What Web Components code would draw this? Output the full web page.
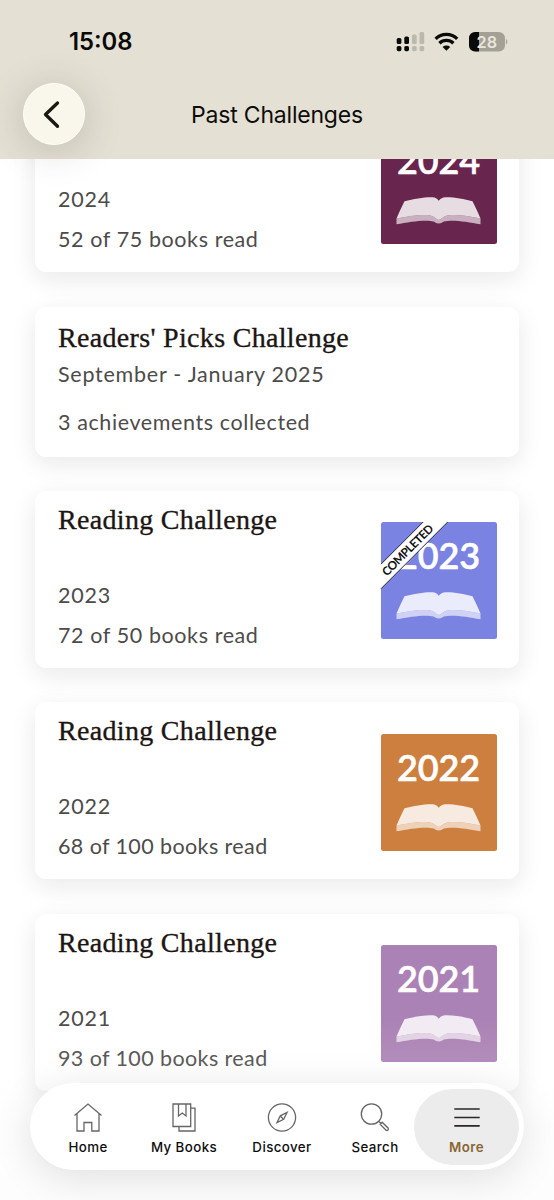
<!DOCTYPE html>
<html lang="en">
<head>
<meta charset="utf-8">
<meta name="viewport" content="width=device-width, initial-scale=1">
<title>Past Challenges</title>
<style>
    html, body {
        margin: 0;
        height: 1200px;
        overflow: hidden;
        background: #fff;
    }
    .tight { --tracking: .4px; }
</style>
</head>
<body>
<challenges-app>
    <page-header slot="header" heading="Past Challenges"></page-header>

    <challenge-card period="2024" detail="52 of 75 books read">
        <year-badge slot="badge" year="2024" color="#68264e"></year-badge>
    </challenge-card>
    <challenge-card compact heading="Readers' Picks Challenge" period="September - January 2025" detail="3 achievements collected"></challenge-card>
    <challenge-card heading="Reading Challenge" period="2023" detail="72 of 50 books read">
        <year-badge slot="badge" year="2023" color="#7a82e2" completed></year-badge>
    </challenge-card>
    <challenge-card class="tight" heading="Reading Challenge" period="2022" detail="68 of 100 books read">
        <year-badge slot="badge" year="2022" color="#cc7f3f"></year-badge>
    </challenge-card>
    <challenge-card class="tight" heading="Reading Challenge" period="2021" detail="93 of 100 books read">
        <year-badge slot="badge" year="2021" color="#ab82b5"></year-badge>
    </challenge-card>

    <tab-bar slot="tabs">
        <tab-item icon="home" label="Home"></tab-item>
        <tab-item icon="books" label="My Books"></tab-item>
        <tab-item icon="discover" label="Discover"></tab-item>
        <tab-item icon="search" label="Search"></tab-item>
        <tab-item icon="more" label="More" active></tab-item>
    </tab-bar>
</challenges-app>

<script>
class ChallengesApp extends HTMLElement {
    constructor() {
        super();
        this.attachShadow({ mode: 'open' });
        this.shadowRoot.innerHTML = `
            <style>
                :host {
                    display: flex;
                    flex-direction: column;
                    position: relative;
                    width: 554px;
                    height: 1200px;
                    overflow: hidden;
                    background: #fff;
                }
                main {
                    flex: 1;
                    min-height: 0;
                    overflow: hidden;
                }
                /* list is scrolled up under the header */
                .list {
                    display: flex;
                    flex-direction: column;
                    gap: 34.3px;
                    margin-top: -63.7px;
                    padding: 0 35.5px 0 35px;
                }
                /* content fades out towards the floating tab bar */
                .fade {
                    position: absolute;
                    left: 0;
                    right: 0;
                    bottom: 0;
                    height: 180px;
                    background: linear-gradient(rgba(252,252,252,0), rgba(252,252,252,.2) 50%, rgba(250,250,250,.45));
                }
            </style>
            <slot name="header"></slot>
            <main><div class="list"><slot></slot></div></main>
            <div class="fade"></div>
            <slot name="tabs"></slot>
        `;
    }
}

class StatusBar extends HTMLElement {
    constructor() {
        super();
        this.attachShadow({ mode: 'open' });
    }

    connectedCallback() {
        this.shadowRoot.innerHTML = `
            <style>
                :host {
                    display: flex;
                    justify-content: space-between;
                    align-items: center;
                    height: 83px;
                    padding: 0 46px 0 69px;
                    box-sizing: border-box;
                    font-family: Inter, "Liberation Sans", sans-serif;
                }
                .time {
                    font-size: 23.8px;
                    font-weight: 600;
                    color: #0a0a08;
                }
                svg { display: block; }
            </style>
            <span class="time">${this.getAttribute('time')}</span>
            <svg width="112" height="22" viewBox="0 0 112 22">
                <g fill="#0a0a08">
                    <rect x=".7" y="7" width="4.7" height="6" rx="1.6"/>
                    <rect x=".7" y="15" width="4.7" height="5.2" rx="1.6"/>
                    <rect x="8.3" y="5.6" width="4.7" height="7.4" rx="1.6"/>
                    <rect x="8.3" y="15" width="4.7" height="5.2" rx="1.6"/>
                </g>
                <g fill="#bbb8ad">
                    <rect x="16" y="3.5" width="4.7" height="9.5" rx="1.6"/>
                    <rect x="16" y="15" width="4.7" height="5.2" rx="1.6"/>
                    <rect x="23.5" y="1" width="4.7" height="12" rx="1.6"/>
                    <rect x="23.5" y="15" width="4.7" height="5.2" rx="1.6"/>
                </g>
                <g fill="none" stroke="#0a0a08" stroke-width="3.3">
                    <path d="M39.6 7.8a15.2 15.2 0 0 1 21.6 0"/>
                    <path d="M43.4 12.3a10 10 0 0 1 14 0"/>
                </g>
                <path d="M46.6 15.9a5.6 5.6 0 0 1 7.6 0L50.4 19.7z" fill="#0a0a08"/>
                <rect x="73" y="1" width="36" height="19.5" rx="6.2" fill="#a3a095"/>
                <path d="M83 1H79.2a6.2 6.2 0 0 0-6.2 6.2v7.1a6.2 6.2 0 0 0 6.2 6.2h3.8z" fill="#0a0a08"/>
                <path d="M110 8c1.8.7 1.8 4.9 0 5.6z" fill="#a3a095"/>
                <text x="90.8" y="16.6" text-anchor="middle" font-size="16.2" font-weight="600" fill="#e9e6db">28</text>
            </svg>
        `;
    }
}

class PageHeader extends HTMLElement {
    constructor() {
        super();
        this.attachShadow({ mode: 'open' });
    }

    connectedCallback() {
        this.shadowRoot.innerHTML = `
            <style>
                :host {
                    display: block;
                    position: relative;
                    z-index: 1;
                    height: 159px;
                    background: #e4e0d4;
                }
                .bar {
                    display: grid;
                    grid-template-columns: 62px 1fr 62px;
                    align-items: center;
                    height: 62px;
                    padding: 0 23px;
                }
                button {
                    display: grid;
                    place-items: center;
                    width: 62px;
                    height: 62px;
                    padding: 0;
                    border: 1px solid #fffef8;
                    border-radius: 50%;
                    background: #f9f6ec;
                    box-shadow: 0 5px 38px rgba(60,58,45,.22);
                }
                h1 {
                    margin: 2px 0 0;
                    text-align: center;
                    font: 400 23px Inter, "Liberation Sans", sans-serif;
                    letter-spacing: -.2px;
                    color: #0d0d0b;
                }
            </style>
            <status-bar time="15:08"></status-bar>
            <div class="bar">
                <button aria-label="Back">
                    <svg width="30" height="30" viewBox="0 0 30 30" fill="none" stroke="#191812" stroke-width="3.3" stroke-linecap="round" stroke-linejoin="round">
                        <path d="M18.5 4L6.5 15.5L18.5 27.3"/>
                    </svg>
                </button>
                <h1>${this.getAttribute('heading')}</h1>
            </div>
        `;
    }
}

class ChallengeCard extends HTMLElement {
    constructor() {
        super();
        this.attachShadow({ mode: 'open' });
    }

    connectedCallback() {
        this.shadowRoot.innerHTML = `
            <style>
                :host {
                    display: flex;
                    justify-content: space-between;
                    box-sizing: border-box;
                    flex: none;
                    height: 177px;
                    padding: 11px 22px 0 23px;
                    border-radius: 11px;
                    background: #fff;
                    box-shadow: 0 7px 24px rgba(40,25,30,.095);
                }
                :host([compact]) {
                    height: 150px;
                    padding-top: 13.5px;
                }
                h2 {
                    height: 36px;
                    margin: 0 0 37px;
                    font: 400 28px/36px "Liberation Serif", serif;
                    letter-spacing: .32px;
                    -webkit-text-stroke: .35px #1c1513;
                    color: #1c1513;
                    white-space: nowrap;
                }
                p {
                    margin: 0;
                    font: 400 21.5px/40px Lato, sans-serif;
                    letter-spacing: var(--tracking, .6px);
                    color: #4d4b4a;
                    white-space: nowrap;
                }
                .period { letter-spacing: .75px; }
                :host([compact]) h2 { margin-bottom: -2px; }
                :host([compact]) .period { margin-bottom: 8px; }
                slot { display: block; padding-top: 20.5px; }
            </style>
            <div>
                <h2>${this.getAttribute('heading') || ''}</h2>
                <p class="period">${this.getAttribute('period')}</p>
                <p>${this.getAttribute('detail')}</p>
            </div>
            <slot name="badge"></slot>
        `;
    }
}

class YearBadge extends HTMLElement {
    constructor() {
        super();
        this.attachShadow({ mode: 'open' });
    }

    connectedCallback() {
        const ribbon = `
            <path d="M0 42.2L42.2 0H66.7L0 66.7z" fill="#fff"/>
            <path d="M0 42.2L42.2 0M66.7 0L0 66.7" stroke="#26263a"/>
            <text transform="translate(29.6 31) rotate(-45)" text-anchor="middle" textLength="67" font-size="11.8" font-weight="700" fill="#111">COMPLETED</text>
        `;
        this.shadowRoot.innerHTML = `
            <style>
                :host {
                    display: block;
                    width: 116px;
                    height: 117px;
                    border-radius: 2.5px;
                    background: ${this.getAttribute('color')};
                    font-family: Lato, sans-serif;
                }
                svg {
                    display: block;
                    overflow: visible;
                }
            </style>
            <svg width="116" height="117" viewBox="0 0 116 117">
                <text x="57.6" y="46.5" text-anchor="middle" textLength="83" font-size="36" font-weight="600" fill="#fff" stroke="#fff" stroke-width=".5">${this.getAttribute('year')}</text>
                <path d="M23.5 74.3C33 71.8 44 70 51.5 70.3C54.5 70.5 56 71.6 57.8 73.7C59.5 71.6 61.5 70.5 64.5 70.3C72 70 83 71.8 91.5 74.3C94 79.5 97 85.5 99.5 91.5C86 88.6 70 86.2 63.5 89.4C61.5 90.4 59.7 92.8 57.8 93C56 92.8 54 90.4 52 89.4C45.5 86.2 29 88.6 15.5 91.5C18 85.5 21 79.5 23.5 74.3z" fill="#fff" fill-opacity=".84"/>
                <path d="M15.5 91.5C29 88.6 45.5 86.2 52 89.4C54 90.4 56 92.8 57.8 93C59.7 92.8 61.5 90.4 63.5 89.4C70 86.2 86 88.6 99.5 91.5V97.3C86 94.6 70 92.3 63 94.6C61.5 95.2 60.5 96.6 57.8 96.6C55 96.6 54 95.2 52.5 94.6C45.5 92.3 29 94.6 15.5 97.3z" fill="#fff" fill-opacity=".64"/>
                ${this.hasAttribute('completed') ? ribbon : ''}
            </svg>
        `;
    }
}

class TabBar extends HTMLElement {
    constructor() {
        super();
        this.attachShadow({ mode: 'open' });
        this.shadowRoot.innerHTML = `
            <style>
                :host {
                    display: grid;
                    grid-template-columns: 104px 88px 108px 78px 105px;
                    position: absolute;
                    left: 30px;
                    bottom: 30px;
                    width: 494px;
                    height: 87px;
                    box-sizing: border-box;
                    padding: 6px 5px 5px 6px;
                    border-radius: 44px;
                    background: #fff;
                    box-shadow: 0 8px 40px rgba(0,0,0,.12);
                }
            </style>
            <slot></slot>
        `;
    }
}

const ICONS = {
    home: '<path d="M1.5 13.5L15 2L28.5 13.5M4 11.8V29H11V20.5H18.8V29H26V11.8"/>',
    books: '<path d="M4 2H21.7V24.5H4zM9.5 2V14L13.3 11L17 14V2M21.7 6.2H26V29H10V24.5"/>',
    discover: '<circle cx="15" cy="15.5" r="13.6"/><path d="M20 10.5L16.7 17.3L10 20.6L13.3 13.8zM13.8 14.5L16 16.7"/>',
    search: '<circle cx="11.5" cy="12" r="10.2"/><path d="M18.8 19.2L20.5 21M20.2 22.2L22.2 20.2L28.2 26.2C28.7 28 27.5 29 26 28.2z"/>',
    more: '<path d="M2.3 7H27.7M2.3 15.5H27.7M2.3 23.9H27.7" stroke="#2a2725" stroke-width="1.7"/>'
};

class TabItem extends HTMLElement {
    constructor() {
        super();
        this.attachShadow({ mode: 'open' });
    }

    connectedCallback() {
        this.shadowRoot.innerHTML = `
            <style>
                :host {
                    display: flex;
                    flex-direction: column;
                    align-items: center;
                    box-sizing: border-box;
                    padding-top: 12.5px;
                    border-radius: 38px;
                    color: #0e0e0e;
                    font: 500 13.3px/18px Inter, "Liberation Sans", sans-serif;
                    letter-spacing: .42px;
                }
                :host([active]) {
                    background: #ececec;
                    color: #8a6534;
                    font-weight: 600;
                }
                svg { display: block; flex: none; }
                span { margin-top: 5px; white-space: nowrap; }
            </style>
            <svg width="30" height="31" viewBox="0 0 30 31" fill="none" stroke="#666" stroke-width="1.3">${ICONS[this.getAttribute('icon')]}</svg>
            <span>${this.getAttribute('label')}</span>
        `;
    }
}

customElements.define('challenges-app', ChallengesApp);
customElements.define('status-bar', StatusBar);
customElements.define('page-header', PageHeader);
customElements.define('challenge-card', ChallengeCard);
customElements.define('year-badge', YearBadge);
customElements.define('tab-bar', TabBar);
customElements.define('tab-item', TabItem);
</script>
</body>
</html>
